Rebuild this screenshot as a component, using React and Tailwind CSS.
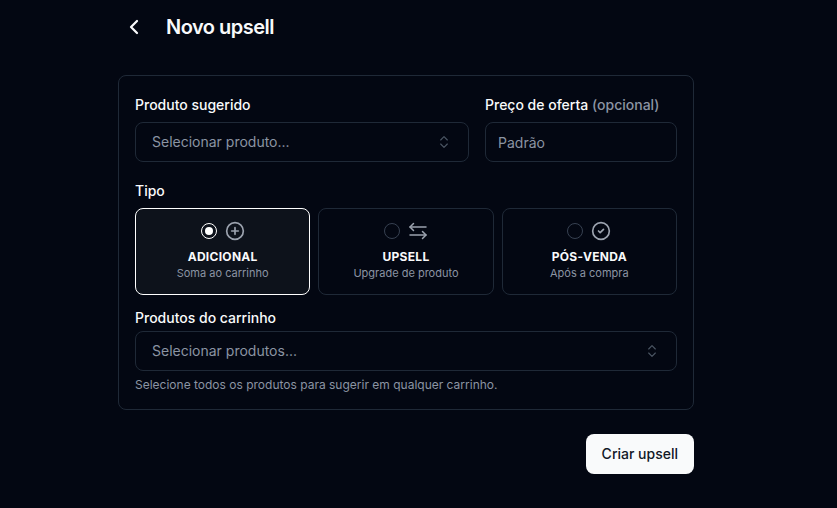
import { ChevronLeft, ChevronsUpDown, CirclePlus, CircleCheck } from 'lucide-react';

function SwapIcon({ size, className }) {
  return (
    <svg width={size} height={size} viewBox="0 0 20 20" fill="none" stroke="currentColor" strokeWidth="1.5" strokeLinecap="round" strokeLinejoin="round" className={className}>
      <path d="M5.5 2.5 2 6l3.5 3.5" />
      <path d="M2 6h16" />
      <path d="M14.5 10.5 18 14l-3.5 3.5" />
      <path d="M18 14H2" />
    </svg>
  );
}

const tipos = [
  { id: 'adicional', label: 'ADICIONAL', sub: 'Soma ao carrinho', Icon: CirclePlus, selected: true },
  { id: 'upsell', label: 'UPSELL', sub: 'Upgrade de produto', Icon: SwapIcon },
  { id: 'pos', label: 'PÓS-VENDA', sub: 'Após a compra', Icon: CircleCheck },
];

function SelectBox({ text, className }) {
  return (
    <button className={`flex h-10 items-center justify-between rounded-lg border border-[#1f2937] pl-4 pr-4 text-sm text-[#8b94a3] ${className}`}>
      <span>{text}</span>
      <ChevronsUpDown size={16} strokeWidth={1.75} className="text-[#4b5563]" />
    </button>
  );
}

function TipoCard({ label, sub, Icon, selected }) {
  return (
    <div className={`flex h-[87px] flex-col items-center rounded-lg border pt-3 ${selected ? 'border-white bg-[#0d121b]' : 'border-[#1f2937]'}`}>
      <div className="flex items-center gap-2">
        {selected ? (
          <span className="flex h-4 w-4 items-center justify-center rounded-full border border-white">
            <span className="h-2 w-2 rounded-full bg-white" />
          </span>
        ) : (
          <span className="h-4 w-4 rounded-full border border-[#374151]" />
        )}
        <Icon size={20} strokeWidth={2} className="text-[#9ca3af]" />
      </div>
      <div className="mt-2 text-xs leading-4 font-bold tracking-[0.3px] text-[#f9fafb]">{label}</div>
      <div className="text-[11px] leading-4 text-[#8b94a3]">{sub}</div>
    </div>
  );
}

export default function App() {
  return (
    <div className="min-h-[508px] bg-[#030712] pl-[118px] font-['Inter',sans-serif] text-[#f9fafb]">
      <div className="w-[576px]">
        <div className="mb-[21px] flex h-[54px] items-center">
          <button className="flex h-6 w-[48px] items-center pl-1">
            <ChevronLeft size={24} strokeWidth={2.25} />
          </button>
          <h1 className="text-xl leading-7 font-semibold tracking-tight">Novo upsell</h1>
        </div>

        <div className="rounded-lg border border-[#1f2937] px-4 pt-[19px] pb-4">
          <div className="flex gap-4">
            <div className="w-[334px]">
              <label className="mb-[7px] block text-sm leading-5 font-medium">Produto sugerido</label>
              <SelectBox text="Selecionar produto..." className="w-full" />
            </div>
            <div className="flex-1">
              <label className="mb-[7px] block text-sm leading-5 font-medium">
                Preço de oferta <span className="text-[#8b94a3]">(opcional)</span>
              </label>
              <input
                placeholder="Padrão"
                className="h-10 w-full rounded-lg border border-[#1f2937] px-3 text-sm placeholder:text-[#8b94a3]"
              />
            </div>
          </div>

          <label className="mt-[19px] mb-[7px] block text-sm leading-5 font-medium">Tipo</label>
          <div className="grid grid-cols-3 gap-2">
            {tipos.map(t => (
              <TipoCard key={t.id} {...t} />
            ))}
          </div>

          <label className="mt-[13px] mb-[3px] block text-sm leading-5 font-medium">Produtos do carrinho</label>
          <SelectBox text="Selecionar produtos..." className="w-full" />
          <p className="mt-[6px] text-xs leading-4 text-[#8b94a3]">Selecione todos os produtos para sugerir em qualquer carrinho.</p>
        </div>

        <div className="mt-6 flex justify-end">
          <button className="h-10 rounded-lg bg-[#f9fafb] px-4 text-sm font-medium text-[#111827]">Criar upsell</button>
        </div>
      </div>
    </div>
  );
}
